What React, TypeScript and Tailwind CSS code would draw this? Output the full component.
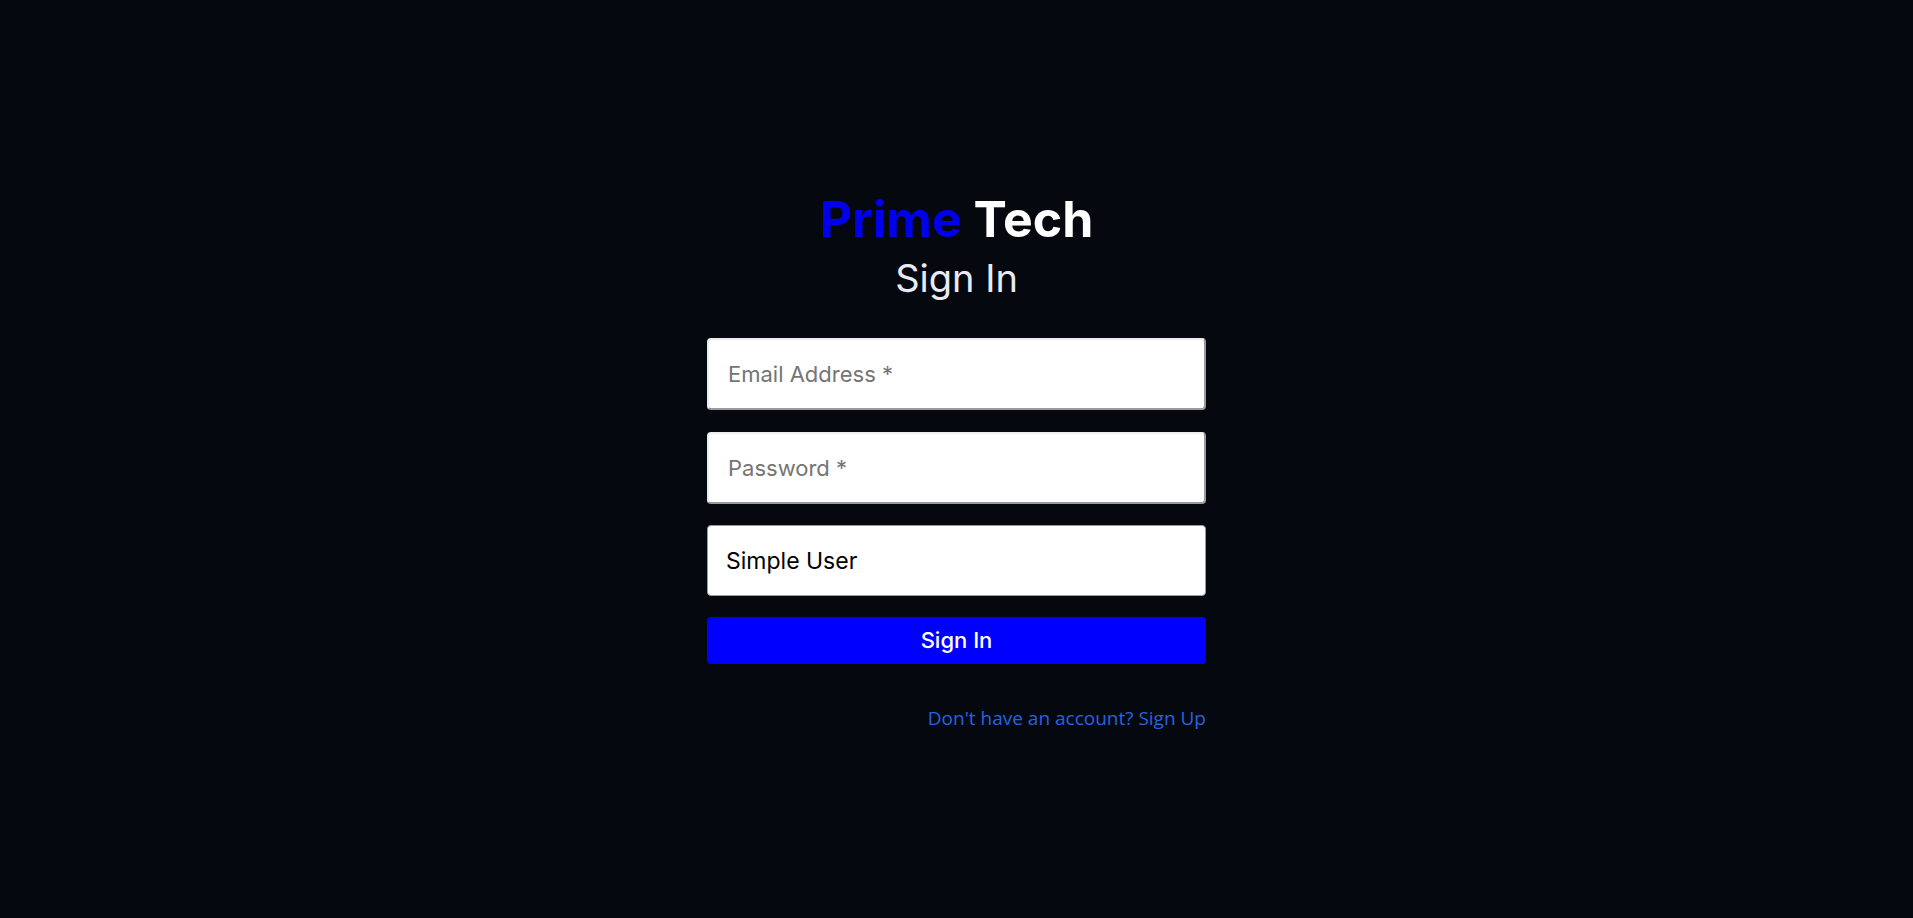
export default function App() {
    return (
        <div className="min-h-screen w-full bg-[#06080f] flex items-center justify-center pt-[10px] font-['Inter',sans-serif]">
            <div className="flex flex-col items-center w-[499px]">
                <h1 className="text-[50px] font-bold leading-[48px]">
                    <span className="text-[#0000ee]">Prime</span> <span className="text-white">Tech</span>
                </h1>
                <h2 className="text-[38px] leading-[40px] text-[#e8ebf5] mt-[15px]">Sign In</h2>

                <form className="w-full mt-[40px] flex flex-col">
                    <input
                        type="email"
                        placeholder="Email Address *"
                        className="w-full h-[72px] bg-white rounded border-2 border-t-[#ececec] border-l-[#ececec] border-r-[#9a9a9a] border-b-[#9a9a9a] px-[19px] text-[22px] text-black placeholder:text-[#757575] outline-none"
                    />
                    <input
                        type="password"
                        placeholder="Password *"
                        className="w-full h-[72px] mt-[22px] bg-white rounded border-2 border-t-[#ececec] border-l-[#ececec] border-r-[#9a9a9a] border-b-[#9a9a9a] px-[19px] text-[22px] text-black placeholder:text-[#757575] outline-none"
                    />
                    <div className="w-full h-[71px] mt-[21px] bg-white rounded border border-[#9a9a9a] px-[18px] flex items-center text-[23px] text-black">
                        Simple User
                    </div>
                    <button type="button" className="w-full h-[47px] mt-[21px] bg-[#0000ff] rounded text-white text-[22px] font-medium">
                        Sign In
                    </button>
                </form>

                <div className="w-full flex justify-end mt-[40px]">
                    <a className="text-[#2563e0] text-[19px] font-['Open_Sans',sans-serif] cursor-pointer">Don't have an account? Sign Up</a>
                </div>
            </div>
        </div>
    );
}
